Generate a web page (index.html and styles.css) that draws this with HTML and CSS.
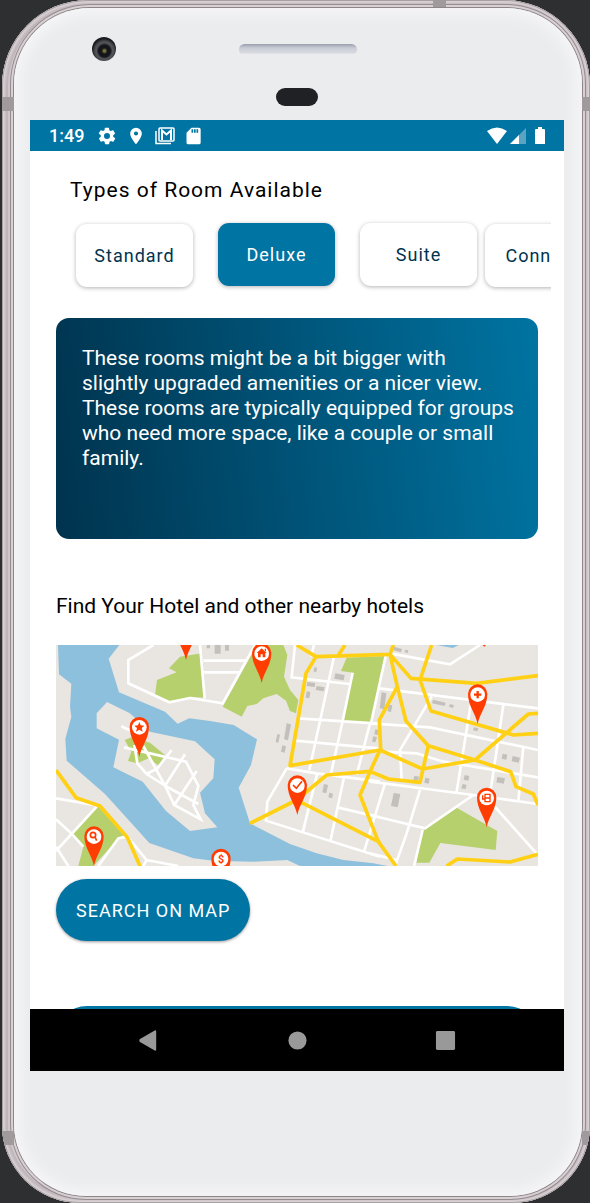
FILE: index.html
```html
<!DOCTYPE html>
<html lang="en">
<head>
<meta charset="utf-8">
<meta name="viewport" content="width=device-width, initial-scale=1">
<title>Hotel rooms</title>
<link rel="stylesheet" href="styles.css">
</head>
<body>
<div class="phone">
  <i class="band band-top"></i>
  <i class="band band-left band-upper"></i>
  <i class="band band-right band-upper"></i>
  <i class="band band-left band-lower"></i>
  <i class="band band-right band-lower"></i>
  <div class="bezel">
    <div class="forehead">
      <span class="camera"></span>
      <span class="speaker"></span>
      <span class="sensor"></span>
    </div>
    <div class="screen">
      <header class="status">
        <span class="clock">1:49</span>
        <svg class="status-icon" viewBox="0 0 24 24" aria-hidden="true"><path d="M19.4 13c.1-.3.1-.6.1-1s0-.7-.1-1l2.100-1.600c.2-.2.3-.4.1-.6l-2-3.500c-.1-.2-.4-.3-.6-.2l-2.500 1c-.5-.4-1.100-.7-1.700-1l-.4-2.600c0-.3-.2-.5-.5-.5h-4c-.2 0-.4.2-.5.4l-.4 2.700c-.6.2-1.100.6-1.700 1l-2.500-1c-.2-.1-.5 0-.6.2l-2 3.500c-.1.2-.1.4.1.6L4.600 11c0 .3-.1.7-.1 1s0 .7.1 1l-2.100 1.600c-.2.2-.3.4-.1.600l2 3.500c.1.200.4.300.6.200l2.500-1c.5.400 1.100.700 1.700 1l.4 2.700c0 .200.200.4.5.4h4c.2 0 .4-.2.5-.4l.4-2.700c.6-.200 1.100-.6 1.700-1l2.500 1c.2.100.5 0 .6-.200l2-3.500c.1-.2.1-.4-.1-.6zM12 15.600a3.600 3.600 0 1 1 0-7.200 3.600 3.600 0 0 1 0 7.200z"/></svg>
        <svg class="status-icon" viewBox="0 0 24 24" aria-hidden="true"><path d="M12 2a7 7 0 0 0-7 7c0 5.200 7 13 7 13s7-7.800 7-13a7 7 0 0 0-7-7zm0 9.500a2.500 2.500 0 1 1 0-5 2.500 2.500 0 0 1 0 5z"/></svg>
        <svg class="status-icon status-mail" viewBox="0 0 20 20" aria-hidden="true"><rect x="4" y="2" width="15" height="13" rx="1"/><path d="M1 5v12.500h15"/><path class="mail-flap" d="M7 14V4.500l4.500 4 4.500-4V14"/></svg>
        <svg class="status-icon" viewBox="0 0 24 24" aria-hidden="true"><path fill-rule="evenodd" d="M9 2h9a2 2 0 0 1 2 2v16a2 2 0 0 1-2 2H5a2 2 0 0 1-2-2V8zm0 2v4h2V4zm3 0v4h2V4zm3 0v4h2V4z"/></svg>
        <span class="spacer"></span>
        <svg class="wifi" viewBox="0 0 20 17" aria-hidden="true"><path d="M0 4q10-7 20 0L10 17z"/></svg>
        <svg class="signal" viewBox="0 0 16 17" aria-hidden="true"><path opacity=".35" d="M16 1v16H0z"/><path d="M9 8v9H0z"/></svg>
        <svg class="battery" viewBox="0 0 10 17" aria-hidden="true"><path d="M3 0h4v2h2a1 1 0 0 1 1 1v14H0V3a1 1 0 0 1 1-1h2z"/></svg>
      </header>
      <main class="content">
        <h1 class="title">Types of Room Available</h1>
        <div class="rooms">
          <button class="room" type="button">Standard</button>
          <button class="room room-raised room-active" type="button">Deluxe</button>
          <button class="room room-raised" type="button">Suite</button>
          <button class="room room-next" type="button">Connecting</button>
        </div>
        <p class="about">These rooms might be a bit bigger with slightly upgraded amenities or a nicer view. These rooms are typically equipped for groups who need more space, like a couple or small family.</p>
        <h2 class="subtitle">Find Your Hotel and other nearby hotels</h2>
        <svg class="map" viewBox="18 15 1446 663" role="img" aria-label="Map of nearby hotels">
          <defs>
            <g id="pin"><path fill="#ff3d00" d="M0 88C-6 56-29 34-29-2a29 29 0 0 1 58 0C29 34 6 56 0 88z"/><circle r="22" fill="#fff"/></g>
          </defs>
          <rect x="18" y="15" width="1446" height="663" fill="#e9e5e0"/>
          <g fill="#8dc0dc">
            <path d="M24 15 27 103 64 131 60 200 64 230 46 297 50 362 165 462 298 609 430 655 490 662 610 665 712 660 750 678H1012L970 670 880 660 800 640 720 612 600 550 566 443 603 375 621 298 551 255 480 243 418 235 383 251 345 215 207 157 176 56 208 15z"/>
            <path d="M1160 15h66l-18 9z"/>
          </g>
          <path fill="#e9e5e0" d="M171 186 140 220V265L207 299 190 382 278 425 348 513 420 573 502 562 465 520 450 458 490 415 494 358 435 304 300 275 240 220z"/>
          <g fill="#b7d06e">
            <path d="M357 85 390 50 455 40 463 173 420 170 358 187 315 165 321 120 380 97z"/>
            <path d="M620 15h80l12 30-10 65 18 40 25 30-7 40-18-7-12-31-28-20-40 13-20 17-28 6-17 32-57-30z"/>
            <path d="M890 53 1007 48 963 250 878 243 908 98 873 93z"/>
            <path d="M64 578 140 500 153 500 228 590 208 593 130 678H85L100 620z"/>
            <path d="M1118 572 1220 503 1342 573 1337 630 1171 609 1138 668H1099z"/>
            <path d="M224 300 245 292 300 308 345 345 328 378 296 355 262 370 234 363 244 335z"/>
          </g>
          <g fill="#c3bfba">
            <path d="M470 15h10v10h-10zM494 15h18v26h-18zM525 15h12v17h-12zM856 100l28 5-3 16-28-5zM793 82l8 1-2 13-8-1zM772 126l24 3-2 12-24-3zM800 138l24 4-3 12-24-4zM770 154l11 2-3 19-11-2zM710 250l13 3-9 48-12-3zM682 282l8 2-5 24-8-2zM697 316l11 3-4 19-11-3zM822 432l12 3-5 25-12-3zM838 458l11 3-3 14-11-3z"/>
            <path d="M995 157l14 3-6 48-14-3zM1015 194l12 2-4 20-10-2zM1032 20l24 7-3 10-24-7zM1066 29l9 2-2 8-9-2zM1149 179l38 9-3 10-38-8zM1200 192l12 4-3 8-12-4zM976 268l10 2-3 15-10-2zM970 289l11 3-5 15-10-2zM1272 262l13 3-3 9-13-3zM1358 341l14 3-3 15-14-3zM1388 348l22 5-4 15-21-4zM1244 405l14 3-3 14-14-3zM1238 432l12 3-4 13-12-3zM1342 411l23 4-4 16-22-4zM1093 407l14 3-3 12-14-3zM1126 413l13 3-3 15-13-3zM1031 459l20 3-8 40-20-4z"/>
          </g>
          <g fill="none" stroke="#fff" stroke-width="8">
            <path d="M310 15 235 60V130L358 187 420 174 518 190 615 15M450 15 464 175M460 62H592M460 97H572"/>
            <path d="M214 259 270 285M222 322 408 365 445 438 430 495 452 538 373 495 345 437 290 402 262 370 253 315M280 318 345 437 445 492M290 402 322 385 365 330M345 437 405 343M373 495 440 393"/>
            <path d="M18 475 150 498M18 538 64 580 100 620M140 500 18 633M18 620 55 678M228 590 205 595 145 678M232 590 290 660 385 678M290 660 280 678"/>
            <path d="M735 15 725 112 898 132M792 15 783 50M852 50 778 390M908 98 878 243 842 405M960 250 920 405M745 235 985 251M735 302 985 325M710 385 800 400 990 425M710 385 652 485 648 542 990 650M802 400 758 578M882 412 842 600M1005 430 942 635M865 503 990 532"/>
            <path d="M1020 40 1200 73 1290 15M1007 48 963 250M988 145 1464 205M1145 170 1050 330 1055 420M960 250 1140 262 1464 330M1262 195 1220 455M1360 195 1320 465M1420 320 1405 485M1000 335 1100 340 1180 365 1464 412M960 425 1270 465 1464 492M1110 450 1070 580 1035 678M960 525 1125 565 1270 465M1330 495 1464 645M1118 570 1092 678M960 640 1040 660"/>
          </g>
          <g fill="none" stroke="#ffd014" stroke-width="11" stroke-linejoin="round">
            <path d="M18 390 78 473 150 498 232 592 270 678"/>
            <path d="M740 15 798 50 1020 43 1030 15M798 50 768 100 720 377 990 330 1118 387 1275 360 1435 222 1464 220M885 15 862 50"/>
            <path d="M600 550 740 480 830 405 960 394 1015 417 1110 427 1135 317M755 488 990 607M990 330 960 395 930 465 985 605 1038 678"/>
            <path d="M1020 43 1042 140 988 240 992 330M1020 43 1083 115 1280 130 1464 107M1145 15 1110 120 1143 213 1390 285 1464 280M1042 140 1068 243 1135 317 1275 360 1382 395 1398 440 1450 462 1464 495M1190 678 1222 657 1380 666 1464 643"/>
          </g>
          <use href="#pin" x="408" y="-28"/>
          <use href="#pin" x="268" y="262"/>
          <use href="#pin" x="635" y="41"/>
          <use href="#pin" x="132" y="590"/>
          <use href="#pin" x="513" y="657"/>
          <use href="#pin" x="742" y="437"/>
          <use href="#pin" x="1283" y="164"/>
          <use href="#pin" x="1310" y="474"/>
          <path fill="#ff3d00" d="M1298 15h10l-5 5zM268 246l4 10 11 1-8 7 3 11-10-6-10 6 3-11-8-7 11-1zM635 25l15 14h-4v13h-8v-9h-6v9h-8V39h-4zM644 26h4v9l-4-4z"/>
          <g fill="none" stroke="#ff3d00" stroke-width="5">
            <circle cx="129" cy="585" r="8"/>
            <path d="M135 591 140 602M729 435 739 445 756 424"/>
            <path d="M1283 153V175M1272 164H1294" stroke-width="7"/>
            <path d="M1305 463h15v22h-15zM1305 474h15M1298 466v11h7" stroke-width="4"/>
          </g>
          <text class="map-sign" x="513" y="668">$</text>
        </svg>
        <button class="search" type="button">SEARCH ON MAP</button>
        <div class="peek"><button class="next" type="button" aria-label="Continue"></button></div>
      </main>
      <nav class="nav">
        <button class="nav-key" type="button" aria-label="Back"><svg viewBox="0 0 22 22"><path d="M18 1.500v19q0 1.500-1.500 1L1 12.500q-1.500-1.500 0-3L16.500.5q1.500-.5 1.500 1z"/></svg></button>
        <button class="nav-key" type="button" aria-label="Home"><svg viewBox="0 0 22 22"><circle cx="11" cy="11" r="9.500"/></svg></button>
        <button class="nav-key" type="button" aria-label="Recent apps"><svg viewBox="0 0 22 22"><rect x="1" y="1" width="20" height="20" rx="1.500"/></svg></button>
      </nav>
    </div>
  </div>
</div>
</body>
</html>
```
FILE: styles.css
```css
* { box-sizing: border-box; }

body {
  margin: 0;
  background: #2d2f31;
  font-family: Roboto, "Liberation Sans", sans-serif;
  color: #000;
}

button {
  border: 0;
  font: inherit;
  cursor: pointer;
}

.phone {
  position: relative;
  margin-left: 2px;
  padding: 8px 8px 7px 12px;
  border-radius: 86px 86px 78px 78px;
  background: #cfc7ca;
  box-shadow: inset 0 0 0 1px #a79fa2, inset 0 0 3px 3px #ddd5d8, inset 0 0 0 6px #bdb4b8;
  overflow: hidden;
}

.bezel {
  padding: 0 18px 125px 16px;
  border-radius: 76px 76px 72px 72px;
  background: #ebecee;
  box-shadow: 0 0 0 1px #8d8588, 0 0 0 3px #d8d0d3, 0 0 0 4px #948c8f, inset 0 0 14px 6px #f6f6f8;
}

.band {
  position: absolute;
  background: #a19a9d;
}

.band-top { top: 0; right: 144px; width: 13px; height: 7px; }
.band-left { left: 0; width: 12px; height: 14px; }
.band-right { right: 0; width: 8px; height: 14px; }
.band-upper { top: 97px; }
.band-lower { bottom: 58px; }

.forehead {
  position: relative;
  height: 112px;
}

.camera, .speaker, .sensor { position: absolute; }

.camera {
  left: 62px;
  top: 29px;
  width: 24px;
  height: 24px;
  border-radius: 50%;
  background: radial-gradient(circle at 52% 58%, #77743a 0 1px, #15161c 3px 6px, #55565b 8px, #45464a 10px, #1c1d20 12px);
}

.speaker {
  left: 50%;
  top: 36px;
  width: 118px;
  height: 11px;
  margin-left: -58px;
  border-radius: 6px;
  background: linear-gradient(#9a9fac, #c9ccd5 4px, #d9dbe1 9px, #f3f3f5);
}

.sensor {
  left: 50%;
  top: 80px;
  width: 42px;
  height: 18px;
  margin-left: -21px;
  border-radius: 9px;
  background: #202124;
}

.screen { background: #fff; }

.status {
  display: flex;
  align-items: center;
  height: 31px;
  padding: 0 19px;
  background: #0074a2;
  color: #fff;
}

.status svg { fill: currentColor; }

.clock {
  width: 48px;
  font-size: 18px;
  font-weight: 500;
}

.status-icon {
  width: 20px;
  height: 20px;
  margin-right: 9px;
}

.status .status-mail {
  fill: none;
  stroke: currentColor;
  stroke-width: 1.5;
}

.mail-flap { stroke-width: 2; }

.spacer { flex: 1; }

.wifi { width: 20px; height: 17px; margin-right: 3px; }
.signal { width: 16px; height: 17px; margin-right: 9px; }
.battery { width: 10px; height: 17px; }

.content {
  display: flex;
  flex-direction: column;
  padding: 26px 26px 0;
}

.title, .subtitle {
  margin: 0;
  font-size: 21px;
  font-weight: 400;
  line-height: 26px;
}

.title {
  padding-left: 14px;
  letter-spacing: 1px;
}

.rooms {
  display: flex;
  gap: 25px;
  margin-right: -13px;
  padding: 20px 0 31px 20px;
  overflow: hidden;
}

.room {
  flex: none;
  width: 117px;
  height: 63px;
  margin-top: 1px;
  padding: 0;
  border-radius: 11px;
  background: #fff;
  box-shadow: 0 1px 4px rgba(0, 0, 0, .3);
  color: #00334e;
  font-size: 18px;
  letter-spacing: 1px;
}

.room-raised { margin: 0 0 1px; }

.room-active {
  background: #0074a2;
  color: #fff;
}

.room-next {
  width: 142px;
  margin-left: -17px;
}

.about {
  min-height: 221px;
  margin: 0;
  padding: 28px 24px 28px 26px;
  border-radius: 13px;
  background: linear-gradient(83deg, #00334e, #0074a2);
  color: #fff;
  font-size: 21px;
  line-height: 25px;
}

.subtitle { padding: 54px 0 26px; }

.map {
  display: block;
  width: 100%;
}

.map-sign {
  fill: #ff3d00;
  font-size: 32px;
  font-weight: 700;
  text-anchor: middle;
}

.search {
  align-self: flex-start;
  height: 62px;
  margin: 13px 0 65px;
  padding: 0 20px;
  border-radius: 31px;
  background: #0074a2;
  box-shadow: 0 1px 3px rgba(0, 0, 0, .4);
  color: #fff;
  font-size: 18px;
  letter-spacing: 1px;
}

.peek {
  height: 3px;
  overflow: hidden;
}

.next {
  display: block;
  width: 100%;
  height: 62px;
  border-radius: 31px;
  background: #0074a2;
}

.nav {
  display: flex;
  justify-content: center;
  gap: 104px;
  height: 62px;
  background: #000;
}

.nav-key {
  display: grid;
  place-items: center;
  width: 44px;
  padding: 0;
  background: none;
}

.nav-key svg {
  width: 21px;
  height: 21px;
  fill: #999;
}
```
